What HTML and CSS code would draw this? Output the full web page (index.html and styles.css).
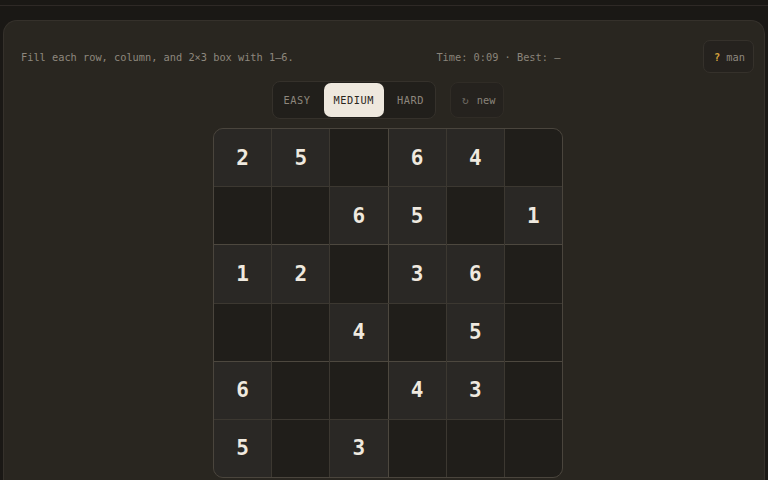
FILE: index.html
```html
<!DOCTYPE html>
<html>
<head>
<meta charset="utf-8">
<link rel="stylesheet" href="styles.css">
</head>
<body>
<div class="topbar"></div>
<main class="card">
  <header class="head">
    <span class="hint">Fill each row, column, and 2×3 box with 1–6.</span>
    <span class="time">Time: 0:09 · Best: —</span>
    <button class="man"><span class="q">?</span> man</button>
  </header>
  <div class="controls">
    <div class="seg">
      <button class="opt">EASY</button>
      <button class="opt active">MEDIUM</button>
      <button class="opt">HARD</button>
    </div>
    <button class="new"><span class="ico">↻</span> new</button>
  </div>
  <div class="board">
    <div class="c g">2</div><div class="c g">5</div><div class="c bc"></div><div class="c g">6</div><div class="c g">4</div><div class="c"></div>
    <div class="c br"></div><div class="c br"></div><div class="c g bc br">6</div><div class="c g br">5</div><div class="c br"></div><div class="c g br">1</div>
    <div class="c g">1</div><div class="c g">2</div><div class="c bc"></div><div class="c g">3</div><div class="c g">6</div><div class="c"></div>
    <div class="c br"></div><div class="c br"></div><div class="c g bc br">4</div><div class="c br"></div><div class="c g br">5</div><div class="c br"></div>
    <div class="c g">6</div><div class="c"></div><div class="c bc"></div><div class="c g">4</div><div class="c g">3</div><div class="c"></div>
    <div class="c g">5</div><div class="c"></div><div class="c g bc">3</div><div class="c"></div><div class="c"></div><div class="c"></div>
  </div>
</main>
</body>
</html>
```
FILE: styles.css
```css
html, body {
  margin: 0;
  padding: 0;
  background: #1a1815;
  overflow: hidden;
  height: 480px;
}
body {
  font-family: "DejaVu Sans Mono", "Liberation Mono", monospace;
}
.topbar {
  height: 5px;
  border-bottom: 1px solid #2e2926;
}
.card {
  margin: 14px 3px 0 3px;
  background: #292620;
  border: 1px solid #35312b;
  border-bottom: none;
  border-radius: 14px 14px 0 0;
  padding: 19px 10px 0 18px;
  height: 600px;
}
.head {
  display: flex;
  justify-content: space-between;
  align-items: center;
  height: 33px;
  font-size: 10.3px;
  margin-left: -1px;
}
.hint { color: #8e887e; }
.time { color: #8a847a; }
.man {
  height: 33px;
  padding: 0 8px 0 10px;
  background: #25221e;
  border: 1px solid #35312b;
  border-radius: 7px;
  color: #8e887e;
  font-family: inherit;
  font-size: 10.3px;
}
.q { color: #d2a03c; font-weight: bold; }
.controls {
  display: flex;
  justify-content: center;
  align-items: center;
  gap: 14px;
  margin-top: 9px;
  height: 36px;
}
.seg {
  display: flex;
  gap: 3px;
  padding: 1px;
  background: #211f1b;
  border: 1px solid #35312b;
  border-radius: 8px;
}
.opt {
  height: 34px;
  padding: 0 10px;
  border: none;
  border-radius: 7px;
  background: transparent;
  color: #8e877d;
  font-family: inherit;
  font-size: 10.3px;
  letter-spacing: 0.55px;
}
.opt.active {
  background: #eee8de;
  color: #2a2620;
}
.new {
  height: 36px;
  padding: 0 8px 0 11px;
  background: #25221e;
  border: 1px solid #302c26;
  border-radius: 8px;
  color: #8a847a;
  font-family: inherit;
  font-size: 10.3px;
}
.ico { color: #6f6a62; font-size: 11px; margin-right: 2px; }
.board {
  box-sizing: border-box;
  width: 350px;
  height: 350px;
  margin: 10px auto 0;
  display: grid;
  grid-template-columns: repeat(6, 1fr);
  grid-template-rows: repeat(6, 1fr);
  gap: 1px;
  background: #3c3831;
  border: 1px solid #4a453d;
  border-radius: 10px;
  overflow: hidden;
}
.c {
  background: #201e1a;
  display: flex;
  align-items: center;
  justify-content: center;
  font-family: "DejaVu Sans Mono", monospace;
  font-weight: bold;
  font-size: 21px;
  color: #efe9df;
}
.c.g { background: #2a2825; }
.c.bc { box-shadow: 1px 0 0 #4d483f; }
.c.br { box-shadow: 0 1px 0 #4d483f; }
.c.bc.br { box-shadow: 1px 0 0 #4d483f, 0 1px 0 #4d483f, 1px 1px 0 #4d483f; }
```
